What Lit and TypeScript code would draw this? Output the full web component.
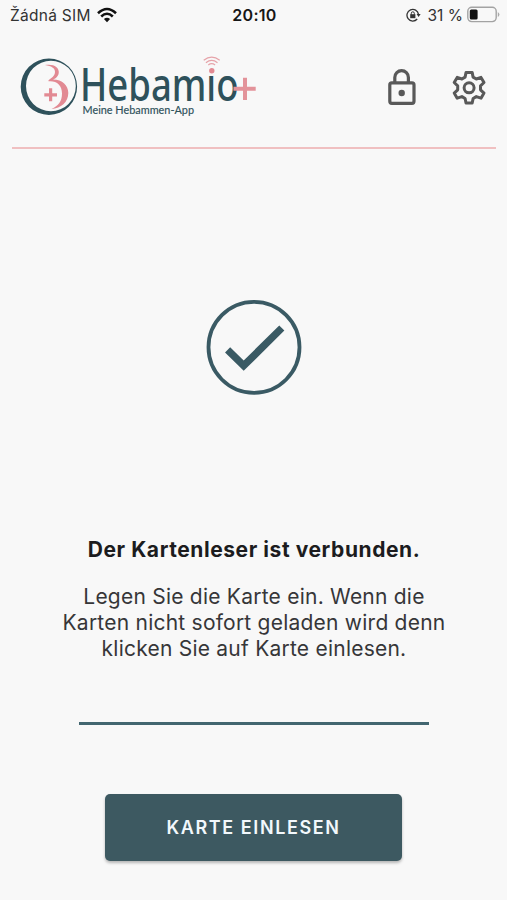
import { LitElement, html, css } from "lit";
import { customElement } from "lit/decorators.js";

@customElement("status-bar")
class StatusBar extends LitElement {
  static styles = css`
    :host { display: grid; grid-template-columns: 1fr auto 1fr; align-items: center; height: 30px; padding: 0 7px 0 10px; box-sizing: border-box; font: 15.5px Inter, "Liberation Sans", sans-serif; color: #333; white-space: nowrap; }
    .side { display: flex; align-items: center; }
    .carrier { letter-spacing: 0.28px; }
    .right { justify-content: flex-end; }
    .time { font-weight: 600; color: #161616; letter-spacing: 0.3px; font-size: 16px; margin-right: 1px; }
    .wifi { margin-left: 6px; margin-bottom: 1px; }
    .lock { margin-right: 7px; }
    .battery { margin-left: 4px; margin-bottom: 1px; }
    svg { display: block; }
  `;
  render() {
    return html`
      <div class="side">
        <span class="carrier">Žádná SIM</span>
        <svg class="wifi" width="20" height="16" viewBox="0 0 20 16" fill="none" stroke="#111" stroke-width="2.6">
          <path d="M1 6.2Q10-2.2 19 6.2M4.2 9.5Q10 4 15.8 9.5" />
          <path d="M10 15.2L6.9 12Q10 9.4 13.1 12Z" fill="#111" stroke="none" />
        </svg>
      </div>
      <span class="time">20:10</span>
      <div class="side right">
        <svg class="lock" width="15" height="14" viewBox="0 0 15 14" fill="none" stroke="#333" stroke-width="1.3">
          <path d="M11.2 11A5.8 5.8 0 1 1 12.5 6.3" />
          <path d="M10.6 6H14.6L12.6 9Z" fill="#333" stroke="none" />
          <path d="M4.2 6.2h5.2v4h-5.2z" fill="#333" stroke="none" />
          <path d="M5.3 6.8V5.3a1.5 1.5 0 0 1 3 0v1.5" stroke-width="1" />
        </svg>
        <span>31 %</span>
        <svg class="battery" width="33" height="17" viewBox="0 0 33 17">
          <rect x="0.8" y="1.2" width="28.4" height="14.4" rx="4" fill="none" stroke="#a3a3a3" stroke-width="1.4" />
          <rect x="2.8" y="3.5" width="7.8" height="10" rx="1.5" fill="#111" />
          <path d="M30.8 6v5Q32.4 10 32.4 8.5T30.8 6Z" fill="#aaa" />
        </svg>
      </div>
    `;
  }
}

@customElement("brand-header")
class BrandHeader extends LitElement {
  static styles = css`
    :host { display: flex; justify-content: space-between; align-items: center; height: 117px; margin: 0 11px 0 12px; border-bottom: 2px solid #f0c0c1; }
    svg { display: block; overflow: visible; }
    .actions { display: flex; gap: 31px; margin-right: 9px; }
    .word { font: 500 46px "Noto Sans", "Open Sans", sans-serif; fill: #2e515b; }
    .tagline { font: 400 11px Lato, "Noto Sans", sans-serif; fill: #2e515b; stroke: #2e515b; stroke-width: 0.15px; }
  `;
  render() {
    return html`
      <svg width="250" height="76" viewBox="12 51 250 76">
        <path fill="#2e515b" fill-rule="evenodd" d="M20.7 86.7a28.2 28.2 0 1 0 56.4 0a28.2 28.2 0 1 0-56.4 0ZM26 86a24.9 25.3 0 1 1 49.8 0a24.9 25.3 0 1 1-49.8 0Z" />
        <path fill="#e28a93" d="M45 65C54 63.5 58.8 67.5 58.8 72C58.8 76 56 78.3 53 79.5C62.5 79.5 68.3 85.5 68.3 93C68.3 102 61 108.5 51.5 109C58.5 106 62 101 62 93.5C62 85 56.5 80.5 48.5 81.3C47.5 79.5 55 77.5 55 72C55 68 51.5 66 45 65Z" />
        <path stroke="#e28a93" stroke-width="3.2" d="M44.3 94.8H57M50.6 88.3V101.3" />
        <text class="word" x="80" y="101" textLength="158.5" lengthAdjust="spacingAndGlyphs">Hebamıo</text>
        <text class="tagline" x="82.5" y="113.5" textLength="111.5" lengthAdjust="spacingAndGlyphs">Meine Hebammen-App</text>
        <circle cx="211.8" cy="70.8" r="2.7" fill="#e28a93" />
        <path fill="none" stroke="#e6a3a9" stroke-width="1.2" d="M203.7 60.2Q211.7 54 219.7 60.2M205.9 62.7Q211.7 58.2 217.5 62.7M208.3 65Q211.7 62.4 215.1 65" />
        <path stroke="#e3939a" stroke-width="4" d="M233.5 88.8H255.7M245 77.7V100" />
      </svg>
      <div class="actions">
        <svg width="36" height="38" viewBox="384 70 36 38" fill="none" stroke="#595959" stroke-width="3.2">
          <rect x="389.8" y="82.8" width="24.2" height="20.5" rx="2" />
          <path d="M394.8 82V77.5a6.8 6.8 0 0 1 13.6 0V82" />
          <circle cx="401.7" cy="93" r="3.2" fill="#595959" stroke="none" />
        </svg>
        <svg width="36" height="38" viewBox="451 70 36 38" fill="none" stroke="#595959" stroke-width="3" stroke-linejoin="round">
          <path d="M466 72.6h6.2l.9 4.5 3.2 1.9 4.7-1.6 3 5.1-3.5 3.3v4l3.5 3.3-3 5.1-4.7-1.6-3.2 1.9-.9 4.5H466l-.9-4.5-3.2-1.9-4.7 1.6-3-5.1 3.5-3.3v-4l-3.5-3.3 3-5.1 4.7 1.6 3.2-1.9Z" />
          <circle cx="469.1" cy="87.8" r="5" />
        </svg>
      </div>
    `;
  }
}

@customElement("app-root")
class AppRoot extends LitElement {
  static styles = css`
    :host { display: flex; flex-direction: column; height: 900px; background: #f8f8f8; font-family: Inter, "Liberation Sans", sans-serif; color: #363638; overflow: hidden; }
    main { display: flex; flex-direction: column; align-items: center; padding-top: 150px; text-align: center; }
    .check { display: block; }
    h1 { margin: 142px 0 0; padding-left: 1px; font-size: 21px; line-height: 26px; font-weight: 700; color: #1c1c1e; white-space: nowrap; letter-spacing: 0.57px; }
    p { margin: 21px 0 0; font-size: 21px; line-height: 25.8px; letter-spacing: 0.23px; white-space: nowrap; padding-left: 1px; }
    .rule { width: 350px; height: 3px; margin-top: 60.6px; background: #426670; }
    button { width: 297px; height: 67px; margin-top: 69px; padding: 0; border: 0; border-radius: 5px; background: #3d5961; color: #f2f8fc; font: 600 18px Inter, "Liberation Sans", sans-serif; letter-spacing: 1.6px; box-shadow: 0 2px 3px #0004; }
  `;
  render() {
    return html`
      <status-bar></status-bar>
      <brand-header></brand-header>
      <main>
        <svg class="check" width="96" height="96" viewBox="206 299 96 96" fill="none" stroke="#3a5a64">
          <circle cx="254" cy="347.3" r="45.5" stroke-width="3.8" />
          <path d="M227.6 349.8L243.7 365.7L281.8 328" stroke-width="7.3" />
        </svg>
        <h1>Der Kartenleser ist verbunden.</h1>
        <p>Legen Sie die Karte ein. Wenn die<br />Karten nicht sofort geladen wird denn<br />klicken Sie auf Karte einlesen.</p>
        <div class="rule"></div>
        <button>KARTE EINLESEN</button>
      </main>
    `;
  }
}
